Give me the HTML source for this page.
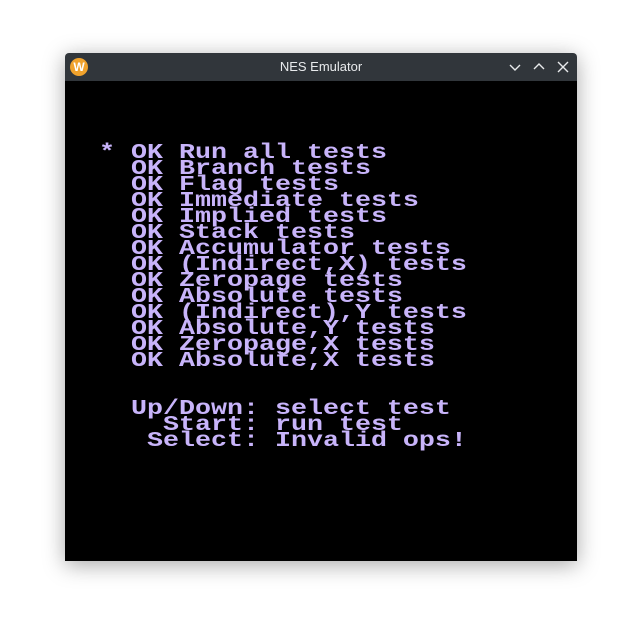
<!DOCTYPE html>
<html><head><meta charset="utf-8"><style>
html,body{margin:0;padding:0;background:#fff;width:642px;height:638px;overflow:hidden;}
.win{position:absolute;left:65px;top:53px;width:512px;height:508px;box-shadow:0 4px 22px rgba(0,0,0,0.35);border-radius:4px 4px 0 0;overflow:hidden;}
.tb{position:absolute;left:0;top:0;width:512px;height:28px;background:#31363b;}
.title{position:absolute;left:0;width:512px;top:6px;text-align:center;color:#e8eaec;font:13px "Liberation Sans",sans-serif;}
.icon{position:absolute;left:5px;top:5px;width:18px;height:18px;border-radius:50%;background:#f0a22c;color:#fff;font:bold 12px "Liberation Sans",sans-serif;text-align:center;line-height:18px;}
.scr{position:absolute;left:0;top:28px;width:512px;height:480px;background:#000;}
pre{position:absolute;margin:0;left:34px;top:64px;font:bold 26.67px "Liberation Mono",monospace;line-height:20px;color:#c8b4fa;transform:scaleY(0.8);transform-origin:0 0;}
svg{position:absolute;top:8px;}
</style></head><body>
<div class="win">
<div class="tb"><div class="icon">W</div><div class="title">NES Emulator</div>
<svg style="left:444px" width="12" height="12"><path d="M1 4 L6 9 L11 4" stroke="#e8eaec" stroke-width="1.4" fill="none"/></svg>
<svg style="left:468px" width="12" height="12"><path d="M1 8 L6 3 L11 8" stroke="#e8eaec" stroke-width="1.4" fill="none"/></svg>
<svg style="left:492px" width="12" height="12"><path d="M1 1 L11 11 M11 1 L1 11" stroke="#e8eaec" stroke-width="1.4" fill="none"/></svg>
</div>
<div class="scr"><pre>* OK Run all tests
  OK Branch tests
  OK Flag tests
  OK Immediate tests
  OK Implied tests
  OK Stack tests
  OK Accumulator tests
  OK (Indirect,X) tests
  OK Zeropage tests
  OK Absolute tests
  OK (Indirect),Y tests
  OK Absolute,Y tests
  OK Zeropage,X tests
  OK Absolute,X tests


  Up/Down: select test
    Start: run test
   Select: Invalid ops!</pre></div>
</div>
</body></html>
